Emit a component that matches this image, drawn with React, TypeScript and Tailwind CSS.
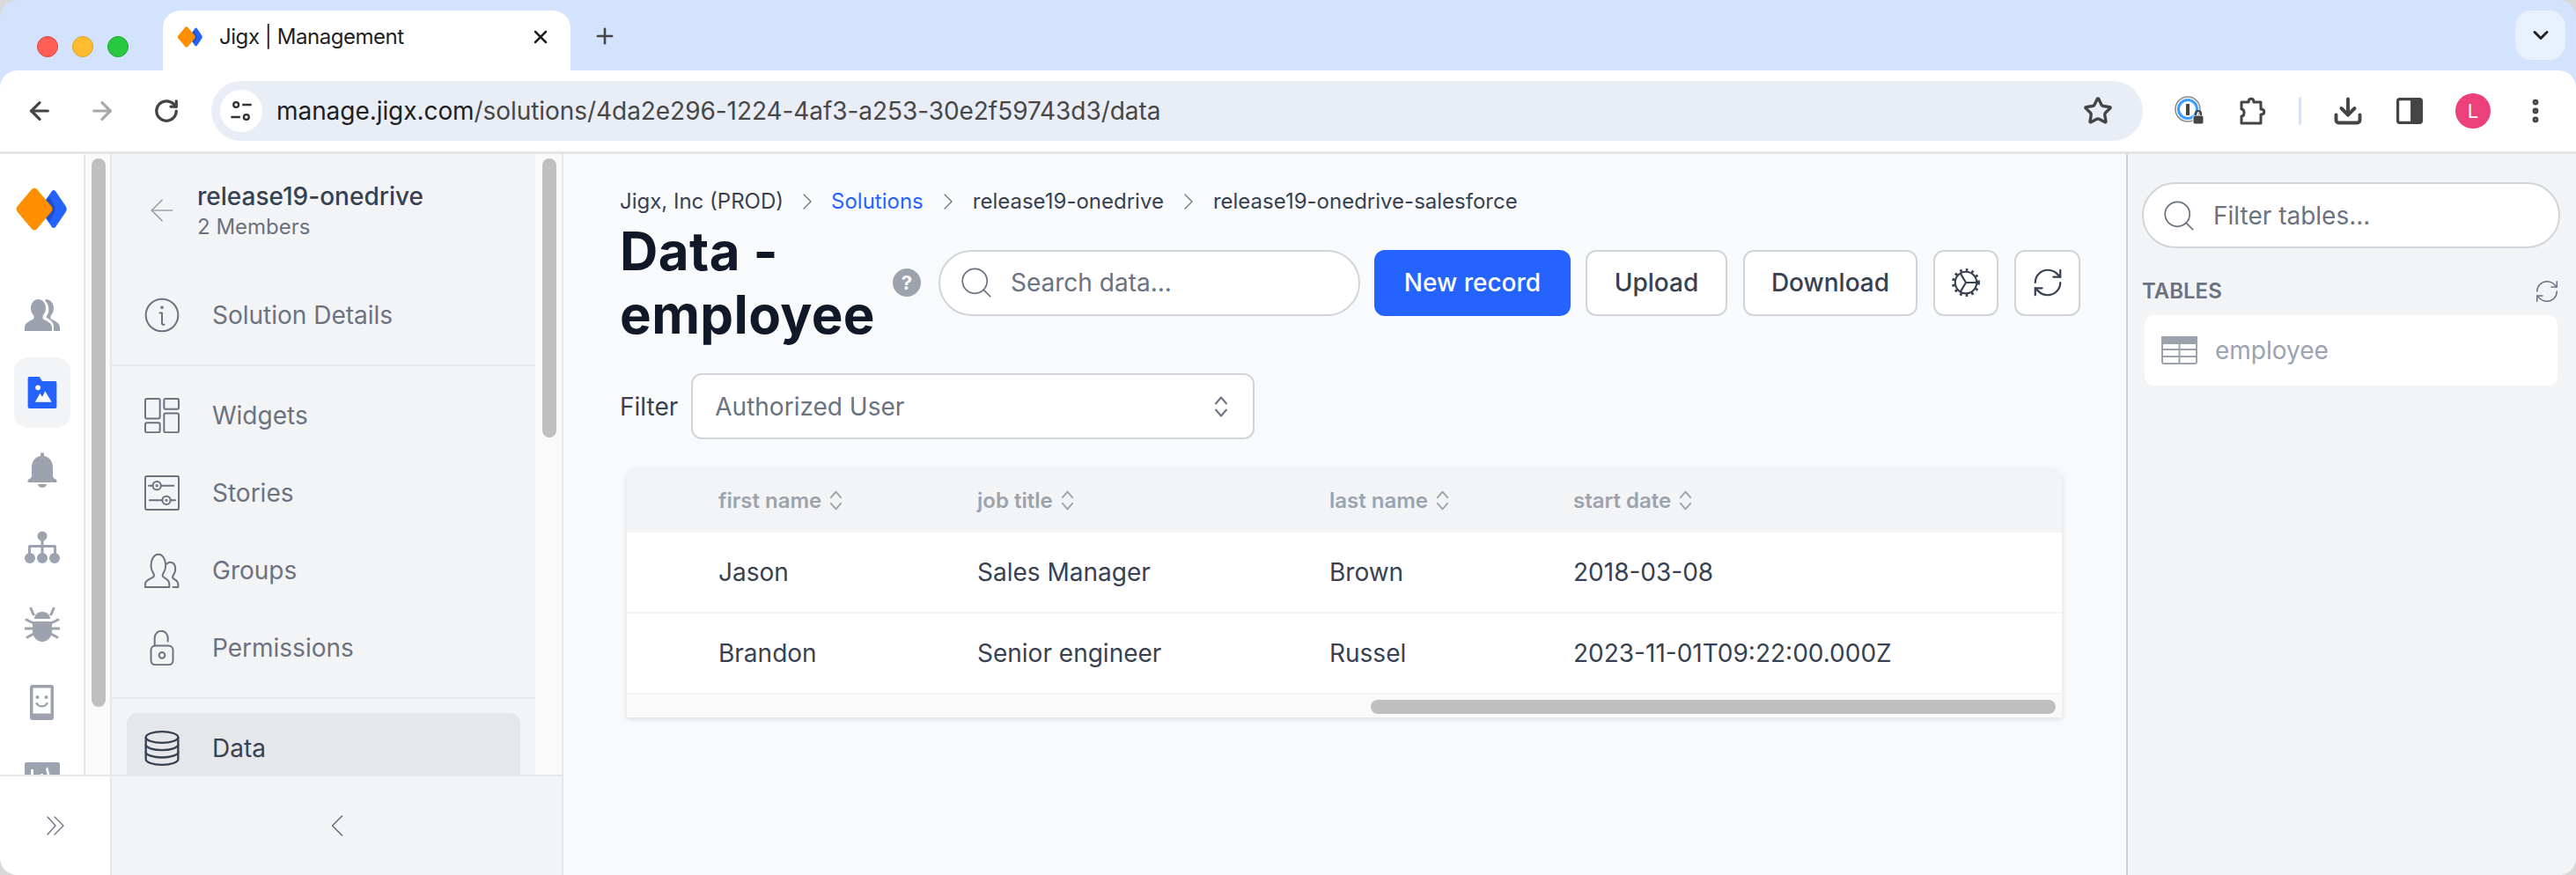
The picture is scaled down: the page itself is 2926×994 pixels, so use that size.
import React from 'react';
import { ArrowLeft, ArrowRight, RotateCw, Star, Plus, X, ChevronDown, Download, EllipsisVertical, ChevronRight, ChevronLeft, Search, RefreshCw } from 'lucide-react';

type IconProps = { className?: string };

const Logo = ({ className }: IconProps) => (
  <svg viewBox="0 0 59 49" className={className}>
    <path d="M45 4 L56.500 21 Q59 24.500 56.500 28 L45 45 Q43 47 41 45 L29 28 Q27 24.500 29 21 L41 4 Q43 2 45 4 Z" fill="#2563ff" />
    <path d="M38 10 L44 21 Q46 24.500 44 28 L38 39 L28 24.500 Z" fill="#1f4fc9" />
    <path d="M18 2 Q21 -1 24 2 L40 21 Q43 24.500 40 28 L24 47 Q21 50 18 47 L2 28 Q-1 24.500 2 21 Z" fill="#ff8f00" />
  </svg>
);

const UsersFilled = ({ className }: IconProps) => (
  <svg viewBox="0 0 40 36" className={className} fill="#9ca3af">
    <path d="M0 36v-4c0-5 5-7 9-9 2-1 2-3 1-5-2-2-3-5-3-8C7 4 11 0 15.500 0S24 4 24 10c0 3-1 6-3 8-1 2-1 4 1 5 4 2 9 4 9 9v4z" />
    <path d="M24 0c5 0 9 4 9 10 0 3-1 6-3 8-1 2-1 4 1 5 4 2 9 4 9 9v4h-7v-5c0-5-4-8-8-10-1-2 1-3 2-6 1-4 0-10-4-13.500z" />
  </svg>
);

const FolderImage = ({ className }: IconProps) => (
  <svg viewBox="0 0 40 44" className={className}>
    <path d="M0 2a2 2 0 0 1 2-2h14l4 6h18a2 2 0 0 1 2 2v34a2 2 0 0 1-2 2H2a2 2 0 0 1-2-2z" fill="#2563ff" />
    <circle cx="14" cy="15" r="3.500" fill="#fff" />
    <path d="M10 35l7-12 3 5 4-8 9 15z" fill="#fff" />
  </svg>
);

const BellFilled = ({ className }: IconProps) => (
  <svg viewBox="0 0 34 40" className={className} fill="#9ca3af">
    <path d="M15 2a2 2 0 0 1 4 0v2c6 1 10 6 10 13v10c0 2 3 3 4 4 1 1 1 3-1 3H2c-2 0-2-2-1-3 1-1 4-2 4-4V17C5 10 9 5 15 4z" />
    <path d="M12 36h10a5 4 0 0 1-10 0z" />
  </svg>
);

const TreeFilled = ({ className }: IconProps) => (
  <svg viewBox="0 0 40 38" className={className} fill="#9ca3af">
    <circle cx="20" cy="6" r="5.500" />
    <circle cx="6" cy="31" r="6" />
    <circle cx="20" cy="31" r="6" />
    <circle cx="34" cy="31" r="6" />
    <path d="M18.500 8h3v8H34a2 2 0 0 1 2 2v9h-3v-8H21.500v8h-3v-8H7v8H4v-9a2 2 0 0 1 2-2h12.500z" />
  </svg>
);

const BugFilled = ({ className }: IconProps) => (
  <svg viewBox="0 0 40 40" className={className} fill="#9ca3af" stroke="#9ca3af" strokeLinecap="round">
    <path d="M7 1l3 7M33 1l-3 7M2 14l8 4M38 14l-8 4M1 24h8M39 24h-8M3 34l7-4M37 34l-7-4" strokeWidth="3" fill="none" />
    <path d="M11 13c0-5 4-8 9-8s9 3 9 8z" stroke="none" />
    <path d="M9 16h22v10c0 8-5 13-11 13S9 34 9 26z" stroke="none" />
  </svg>
);

const PhoneSmile = ({ className }: IconProps) => (
  <svg viewBox="0 0 27 40" className={className}>
    <rect width="27" height="40" rx="3" fill="#9ca3af" />
    <rect x="3.500" y="3.500" width="20" height="29" fill="#fff" />
    <circle cx="8.500" cy="14" r="2" fill="#9ca3af" />
    <circle cx="18.500" cy="14" r="2" fill="#9ca3af" />
    <path d="M7.500 21c2.500 4.500 9.500 4.500 12 0" stroke="#9ca3af" strokeWidth="2.400" fill="none" strokeLinecap="round" />
  </svg>
);

const ChartFilled = ({ className }: IconProps) => (
  <svg viewBox="0 0 40 40" className={className}>
    <rect width="40" height="40" rx="2" fill="#9ca3af" />
    <path d="M7 26V8h3v18zM18 26V13h3v13z" fill="#fff" />
    <path d="M26 5l6 22h-3L24 8z" fill="#fff" />
  </svg>
);

const thin = { fill: 'none', stroke: 'currentColor', strokeWidth: 1.2, strokeLinecap: 'round', strokeLinejoin: 'round' } as const;

const InfoLine = ({ className }: IconProps) => (
  <svg viewBox="0 0 24 24" className={className} {...thin}>
    <circle cx="12" cy="12" r="11" />
    <path d="M10.500 10.500H12v7c0 .8.6 1 1.500 1" />
    <circle cx="12" cy="6.800" r=".5" />
  </svg>
);

const WidgetsLine = ({ className }: IconProps) => (
  <svg viewBox="0 0 24 24" className={className} {...thin}>
    <rect x=".6" y=".6" width="10" height="13.500" rx="1" />
    <rect x="13.400" y=".6" width="10" height="7" rx="1" />
    <rect x=".6" y="17" width="10" height="6.500" rx="1" />
    <rect x="13.400" y="10.500" width="10" height="13" rx="1" />
  </svg>
);

const StoriesLine = ({ className }: IconProps) => (
  <svg viewBox="0 0 24 24" className={className} {...thin}>
    <rect x=".6" y=".6" width="22.800" height="22.800" rx="1" />
    <circle cx="8.500" cy="7" r="2.800" />
    <path d="M3 7h2.700M11.300 7H20" />
    <circle cx="15" cy="17" r="2.800" />
    <path d="M3.500 17h8.700M17.800 17H21" />
    <circle cx="8.500" cy="7" r=".4" />
    <circle cx="15" cy="17" r=".4" />
  </svg>
);

const GroupsLine = ({ className }: IconProps) => (
  <svg viewBox="0 0 24 24" className={className} {...thin}>
    <path d="M.5 23.400v-2c0-2.500 3-3.500 5-4.500 1.500-.8 1.200-2.200.5-3.200-1-1.400-1.500-3-1.500-5 0-4 2-7.700 5-7.700s5 3.700 5 7.700c0 2-.5 3.600-1.500 5-.7 1-1 2.400.5 3.200 2 1 3.500 2 3.500 4.500v2z" />
    <path d="M15.300 7.500c.8-.8 1.700-1.200 2.700-1 2.500.3 3.600 3 3 6-.3 1.300-1 2.300-1.500 3-.5 1-.2 2 1 2.600 1.300.7 2.500 1.500 2.500 3.500v1.800h-3.500" />
  </svg>
);

const LockLine = ({ className }: IconProps) => (
  <svg viewBox="0 0 24 24" className={className} {...thin}>
    <rect x="4.500" y="10.500" width="15" height="13" rx="3" />
    <circle cx="12" cy="17" r="2" />
    <path d="M7 10.500V5.500C7 2.500 9 .5 11.500 .5S16 2.500 16 5.500v2" />
  </svg>
);

const DatabaseLine = ({ className }: IconProps) => (
  <svg viewBox="0 0 24 24" className={className} fill="none" stroke="currentColor" strokeWidth="1.400">
    <ellipse cx="12" cy="4.500" rx="11" ry="3.800" />
    <path d="M1 4.500v15c0 2.100 5 3.800 11 3.800s11-1.700 11-3.800v-15" />
    <path d="M1 9.500c0 2.100 5 3.800 11 3.800s11-1.700 11-3.800M1 14.500c0 2.100 5 3.800 11 3.800s11-1.700 11-3.800" />
  </svg>
);

const UpDown = ({ className }: IconProps) => (
  <svg viewBox="0 0 16 24" className={className} fill="none" stroke="currentColor" strokeWidth="2" strokeLinecap="round" strokeLinejoin="round">
    <path d="M2 8.500L8 1.500l6 7M2 15.500l6 7 6-7" />
  </svg>
);

const GearLine = ({ className }: IconProps) => (
  <svg viewBox="0 0 32 32" className={className} fill="none" stroke="currentColor" strokeWidth="2">
    <circle cx="16" cy="16" r="11.500" />
    <path d="M16 16h11.500M16 16L10 6M16 16l-6 10" />
    <circle cx="16" cy="16" r="13.500" strokeWidth="3" strokeDasharray="2.500 3.800" />
  </svg>
);

const TableIcon = ({ className }: IconProps) => (
  <svg viewBox="0 0 41 32" className={className} fill="none" stroke="#9ca3af" strokeWidth="2">
    <rect x="1" y="1" width="39" height="30" rx="2" />
    <rect x="1" y="1" width="39" height="7" fill="#9ca3af" />
    <path d="M1 15h39M1 23h39M20.500 8v23" />
  </svg>
);

const OnePassword = ({ className }: IconProps) => (
  <svg viewBox="0 0 34 34" className={className}>
    <circle cx="15" cy="15" r="14" fill="none" stroke="#8a8a8a" strokeWidth="1.500" />
    <circle cx="15" cy="15" r="10.500" fill="none" stroke="#3b9eff" strokeWidth="3" />
    <rect x="13" y="9" width="4" height="13" fill="#444" />
    <rect x="21" y="22" width="12" height="10" rx="2" fill="#444" stroke="#fff" strokeWidth="1" />
    <path d="M24 22v-2a3 3 0 0 1 6 0v2" fill="none" stroke="#444" strokeWidth="2" />
  </svg>
);

const Puzzle = ({ className }: IconProps) => (
  <svg viewBox="0 0 32 34" className={className} fill="none" stroke="#444" strokeWidth="3" strokeLinejoin="round">
    <path d="M3 7h8c0-5 6-5 6 0h8v8c5 0 5 6 0 6v10H3v-8c4 0 4-8 0-8z" />
  </svg>
);

const SidePanel = ({ className }: IconProps) => (
  <svg viewBox="0 0 28 28" className={className}>
    <rect x="1.500" y="1.500" width="25" height="25" rx="2" fill="none" stroke="#444" strokeWidth="3" />
    <rect x="15" y="1.500" width="11.500" height="25" fill="#444" />
  </svg>
);

const TuneIcon = ({ className }: IconProps) => (
  <svg viewBox="0 0 24 24" className={className} fill="none" stroke="#333" strokeWidth="2">
    <circle cx="7" cy="6" r="2.500" />
    <path d="M13 6h9M2 18h9" />
    <circle cx="17" cy="18" r="2.500" />
  </svg>
);

const DoubleChevron = ({ className }: IconProps) => (
  <svg viewBox="0 0 20 22" className={className} fill="none" stroke="currentColor" strokeWidth="1.300" strokeLinecap="round" strokeLinejoin="round">
    <path d="M1 1l9 10-9 10M9 1l10 10-10 10" />
  </svg>
);

const railIcons = [
  { icon: <UsersFilled className="h-[36px] w-[40px]" /> },
  { icon: <FolderImage className="h-[36px] w-[40px]" />, active: true },
  { icon: <BellFilled className="h-[40px] w-[34px]" /> },
  { icon: <TreeFilled className="h-[38px] w-[40px]" /> },
  { icon: <BugFilled className="h-[40px] w-[40px]" /> },
  { icon: <PhoneSmile className="h-[40px] w-[27px]" /> },
  { icon: <ChartFilled className="h-[40px] w-[40px]" /> },
];

const navRow = 'flex h-20 shrink-0 items-center gap-[37px] rounded-[12px] pl-5 text-[28px] text-[#6b7280]';
const navIcon = 'h-[40px] w-[40px] shrink-0';
const toolBtn = 'flex h-[75px] items-center justify-center rounded-[12px] border-2 border-[#d1d5db] bg-white text-[28px] font-medium text-[#374151]';
const tableCols = 'grid grid-cols-[294px_400px_277px_1fr] pl-[104px]';

const rows = [
  ['Jason', 'Sales Manager', 'Brown', '2018-03-08'],
  ['Brandon', 'Senior engineer', 'Russel', '2023-11-01T09:22:00.000Z'],
];
const headers = ['first name', 'job title', 'last name', 'start date'];

export default function App() {
  return (
    <div className="flex h-[994px] w-[2926px] flex-col overflow-hidden bg-[#d9d9d9] font-['Inter',sans-serif]">
      <div className="flex h-full flex-col overflow-hidden rounded-[20px] bg-[#d3e3fd]">
        {/* Tab strip */}
        <div className="flex h-20 shrink-0 items-end">
          <div className="mb-[15px] flex items-center gap-[16px] pl-[42px]">
            <span className="h-[24px] w-[24px] rounded-full border border-[#e0443e] bg-[#ff5f57]" />
            <span className="h-[24px] w-[24px] rounded-full border border-[#dea123] bg-[#febc2e]" />
            <span className="h-[24px] w-[24px] rounded-full border border-[#1aab29] bg-[#28c840]" />
          </div>
          <div className="ml-[39px] flex h-[68px] w-[463px] items-center rounded-t-[20px] bg-white pb-[8px] pl-[16px] pr-[22px]">
            <Logo className="h-[24px] w-[30px] shrink-0" />
            <span className="ml-[18px] flex-1 text-[24px] tracking-[-0.45px] text-[#1f1f1f]">Jigx | Management</span>
            <X size={24} strokeWidth={2.5} className="text-[#1f1f1f]" />
          </div>
          <Plus size={28} strokeWidth={2.2} className="mb-[25px] ml-[25px] text-[#444]" />
          <div className="mb-[12px] ml-auto mr-[12px] flex h-[56px] w-[57px] items-center justify-center rounded-[18px] bg-[#e8effd]">
            <ChevronDown size={28} strokeWidth={2.5} className="text-[#1f1f1f]" />
          </div>
        </div>

        {/* Browser toolbar */}
        <div className="flex h-[92px] shrink-0 items-center rounded-t-[20px] bg-white">
          <ArrowLeft size={32} strokeWidth={2.4} className="ml-[29px] text-[#444]" />
          <ArrowRight size={32} strokeWidth={2.4} className="ml-[39px] text-[#a8a8a8]" />
          <RotateCw size={30} strokeWidth={2.6} className="ml-[42px] text-[#444]" />
          <div className="ml-[36px] flex h-[68px] w-[2194px] items-center rounded-full bg-[#e9edf6] pl-[10px] pr-[34px]">
            <div className="flex h-[48px] w-[48px] items-center justify-center rounded-full bg-white">
              <TuneIcon className="h-[28px] w-[28px]" />
            </div>
            <span className="ml-[16px] flex-1 text-[28px] tracking-[-0.06px] text-[#1f1f1f]">
              manage.jigx.com<span className="text-[#474747]">/solutions/4da2e296-1224-4af3-a253-30e2f59743d3/data</span>
            </span>
            <Star size={34} strokeWidth={2.4} className="text-[#444]" />
          </div>
          <OnePassword className="ml-[36px] h-[34px] w-[34px]" />
          <Puzzle className="ml-[39px] h-[34px] w-[32px]" />
          <span className="ml-[36px] h-[32px] w-[3px] rounded bg-[#d3e3fd]" />
          <Download size={36} strokeWidth={2.6} className="ml-[35px] text-[#444]" />
          <SidePanel className="ml-[37px] h-[30px] w-[30px]" />
          <div className="ml-[37px] flex h-[40px] w-[40px] items-center justify-center rounded-full bg-[#ec407a] text-[22px] text-white">L</div>
          <EllipsisVertical size={34} strokeWidth={2.8} className="ml-[34px] text-[#444]" />
        </div>
        <div className="h-[3px] shrink-0 bg-[#e3e5e8]" />

        {/* App */}
        <div className="flex min-h-0 flex-1 bg-[#f9fafb]">
          <div className="flex w-[640px] shrink-0 flex-col border-r-2 border-[#e5e7eb]">
            <div className="flex min-h-0 flex-1">
              {/* Icon rail */}
              <div className="flex w-[97px] shrink-0 flex-col items-center overflow-hidden border-r-2 border-[#e5e7eb] bg-white pt-[38px]">
                <Logo className="mb-[56px] h-[49px] w-[59px] shrink-0" />
                {railIcons.map((item, i) => (
                  <div key={i} className={`mb-2 flex h-20 w-16 shrink-0 items-center justify-center rounded-[16px] ${item.active ? 'bg-[#f3f4f6]' : ''}`}>
                    {item.icon}
                  </div>
                ))}
              </div>
              <div className="w-[30px] shrink-0 border-r-2 border-[#e5e7eb] bg-[#fafafa] pl-[7px] pt-[5px]">
                <div className="h-[623px] w-4 rounded-lg bg-[#bfbfbf]" />
              </div>

              {/* Solution menu */}
              <div className="flex w-[481px] shrink-0 flex-col overflow-hidden bg-[#f3f4f6] pt-[28px]">
                <div className="flex items-center gap-5 pl-[37px]">
                  <ArrowLeft size={40} strokeWidth={1} className="text-[#9ca3af]" />
                  <div>
                    <div className="text-[28px] font-medium leading-[40px] text-[#374151]">release19-onedrive</div>
                    <div className="mt-[-1px] text-[24px] leading-[32px] text-[#6b7280]">2 Members</div>
                  </div>
                </div>
                <div className="mt-[44px] px-[17px] pb-[16px]">
                  <div className={navRow}><InfoLine className={navIcon} />Solution Details</div>
                </div>
                <div className="h-[2px] shrink-0 bg-[#e5e7eb]" />
                <div className="flex flex-col gap-2 px-[17px] py-[16px]">
                  <div className={navRow}><WidgetsLine className={navIcon} />Widgets</div>
                  <div className={navRow}><StoriesLine className={navIcon} />Stories</div>
                  <div className={navRow}><GroupsLine className={navIcon} />Groups</div>
                  <div className={navRow}><LockLine className={navIcon} />Permissions</div>
                </div>
                <div className="h-[2px] shrink-0 bg-[#e5e7eb]" />
                <div className="px-[17px] pt-[16px]">
                  <div className={`${navRow} bg-[#e5e7eb] !text-[#374151]`}><DatabaseLine className={navIcon} />Data</div>
                </div>
              </div>
              <div className="w-[30px] shrink-0 bg-[#fafafa] pl-[8px] pt-[5px]">
                <div className="h-[317px] w-4 rounded-lg bg-[#bfbfbf]" />
              </div>
            </div>
            {/* Collapse bar */}
            <div className="flex h-[114px] shrink-0 border-t-2 border-[#e5e7eb]">
              <div className="flex w-[127px] shrink-0 items-center justify-center rounded-bl-[20px] border-r-2 border-[#e5e7eb] bg-white">
                <DoubleChevron className="h-[22px] w-[20px] text-[#6b7280]" />
              </div>
              <div className="flex flex-1 items-center justify-center bg-[#f3f4f6]">
                <ChevronLeft size={44} strokeWidth={0.9} className="text-[#6b7280]" />
              </div>
            </div>
          </div>

          {/* Main content */}
          <div className="min-w-0 flex-1 pl-[64px] pr-[52px] pt-[38px]">
            <div className="flex h-8 items-center text-[24px] text-[#374151]">
              <span>Jigx, Inc (PROD)</span>
              <ChevronRight size={32} strokeWidth={0.9} className="ml-[11px] text-[#6b7280]" />
              <span className="ml-[11px] text-[#2563ff]">Solutions</span>
              <ChevronRight size={32} strokeWidth={0.9} className="ml-[12px] text-[#6b7280]" />
              <span className="ml-[12px]">release19-onedrive</span>
              <ChevronRight size={32} strokeWidth={0.9} className="ml-[12px] text-[#6b7280]" />
              <span className="ml-[12px]">release19-onedrive-salesforce</span>
            </div>

            <div className="mt-1 flex items-center">
              <h1 className="w-[300px] shrink-0 text-[60px] font-bold leading-[72px] tracking-[0.4px] text-[#111827]">Data - employee</h1>
              <div className="ml-[10px] flex h-8 w-8 shrink-0 items-center justify-center rounded-full bg-[#9ca3af] text-[22px] font-bold text-white">?</div>
              <div className="ml-[20px] flex h-[75px] w-[479px] shrink-0 items-center rounded-full border-2 border-[#d1d5db] bg-white pl-[20px]">
                <Search size={42} strokeWidth={1} className="text-[#6b7280]" />
                <span className="ml-[18px] text-[28px] text-[#6b7280]">Search data...</span>
              </div>
              <div className="ml-4 flex h-[75px] w-[223px] shrink-0 items-center justify-center rounded-[12px] bg-[#2563ff] text-[28px] font-medium text-white">New record</div>
              <div className={`${toolBtn} ml-[17px] w-[161px]`}>Upload</div>
              <div className={`${toolBtn} ml-[18px] w-[198px]`}>Download</div>
              <div className={`${toolBtn} ml-[18px] w-[74px]`}><GearLine className="h-[34px] w-[34px]" /></div>
              <div className={`${toolBtn} ml-[18px] w-[75px]`}><RefreshCw size={38} strokeWidth={1.4} /></div>
            </div>

            <div className="mt-[31px] flex items-center">
              <span className="text-[28px] text-[#374151]">Filter</span>
              <div className="ml-[15px] flex h-[75px] w-[640px] items-center rounded-[12px] border-2 border-[#d1d5db] bg-white pl-[25px] pr-[28px]">
                <span className="flex-1 text-[28px] text-[#6b7280]">Authorized User</span>
                <UpDown className="h-[24px] w-[16px] text-[#6b7280]" />
              </div>
            </div>

            <div className="ml-2 mt-[33px] w-[1630px] overflow-hidden rounded-t-[12px] bg-white shadow-[0_2px_6px_rgba(0,0,0,0.12)]">
              <div className={`${tableCols} h-[73px] items-center bg-[#f3f4f6] text-[24px] font-semibold text-[#9ca3af]`}>
                {headers.map((h) => (
                  <div key={h} className="flex items-center gap-[9px]">
                    {h}
                    <UpDown className="h-[23px] w-[15px]" />
                  </div>
                ))}
              </div>
              {rows.map((row) => (
                <div key={row[0]} className={`${tableCols} h-[92px] items-center border-b-2 border-[#f3f4f6] text-[28px] text-[#374151]`}>
                  {row.map((cell) => <div key={cell}>{cell}</div>)}
                </div>
              ))}
              <div className="h-[26px] bg-[#fafafa] pl-[845px] pt-[6px]">
                <div className="h-4 w-[778px] rounded-lg bg-[#bfbfbf]" />
              </div>
            </div>
          </div>

          {/* Tables panel */}
          <div className="w-[511px] shrink-0 border-l-2 border-[#d1d5db] bg-[#f3f4f6] pl-[16px] pr-[18px] pt-[32px]">
            <div className="flex h-[75px] items-center rounded-full border-2 border-[#d1d5db] bg-white pl-[19px]">
              <Search size={42} strokeWidth={1} className="text-[#6b7280]" />
              <span className="ml-[18px] text-[28px] text-[#6b7280]">Filter tables...</span>
            </div>
            <div className="mt-[33px] flex h-8 items-center justify-between">
              <span className="text-[24px] font-semibold text-[#6b7280]">TABLES</span>
              <RefreshCw size={30} strokeWidth={1.2} className="text-[#6b7280]" />
            </div>
            <div className="mx-[3px] mt-[11px] flex h-20 items-center rounded-[10px] bg-white pl-[19px]">
              <TableIcon className="h-[32px] w-[41px]" />
              <span className="ml-[20px] text-[28px] text-[#9ca3af]">employee</span>
            </div>
          </div>
        </div>
      </div>
    </div>
  );
}
